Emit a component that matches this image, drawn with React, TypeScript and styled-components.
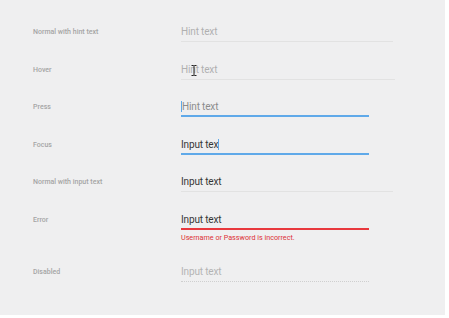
import React from 'react'
import styled, { createGlobalStyle } from 'styled-components'

const GlobalStyle = createGlobalStyle`
  html, body {
    margin: 0;
    background: #ffffff;
    font-family: Roboto, 'Liberation Sans', sans-serif;
  }
`

const Panel = styled.div`
  width: 445px;
  height: 315px;
  background: #efeff0;
  box-sizing: border-box;
  padding: 25px 0 0 33px;
  display: flex;
  flex-direction: column;
`

const Row = styled.div<{ tall?: boolean }>`
  display: grid;
  grid-template-columns: 148px 1fr;
  align-items: start;
  height: ${({ tall }) => (tall ? '52px' : '37.5px')};
`

const Label = styled.div`
  font-size: 7px;
  font-weight: 500;
  line-height: 14px;
  color: #a5a5a5;
`

const Field = styled.div<{ width: number }>`
  width: ${({ width }) => width}px;
  display: flex;
  flex-direction: column;
`

type Tone = 'hint' | 'input' | 'disabled'

const toneColor: Record<Tone, string> = {
  hint: '#b0b0b0',
  input: '#363636',
  disabled: '#b4b4b4',
}

const Value = styled.div<{ tone: Tone }>`
  position: relative;
  font-size: 10px;
  letter-spacing: -0.15px;
  line-height: 14px;
  color: ${({ tone }) => toneColor[tone]};
  padding-bottom: 2px;
`

type Line = 'normal' | 'active' | 'error' | 'disabled'

const Underline = styled.div<{ kind: Line }>`
  height: 0;
  border-bottom: ${({ kind }) =>
    kind === 'active'
      ? '2px solid #5fa9e9'
      : kind === 'error'
      ? '2px solid #e8383d'
      : kind === 'disabled'
      ? '1px dotted #cfcfcf'
      : '1px solid #e2e2e2'};
  margin-top: ${({ kind }) => (kind === 'active' || kind === 'error' ? '-1px' : '0')};
`

const Caret = styled.span`
  display: inline-block;
  width: 1px;
  height: 11px;
  background: #5fa9e9;
  vertical-align: -2px;
`

const Cursor = styled.svg`
  position: absolute;
  left: 10px;
  top: 2px;
`

const ErrorText = styled.div`
  margin-top: 3px;
  font-size: 7.2px;
  line-height: 10px;
  color: #dd2f35;
`

function IBeam() {
  return (
    <Cursor width="6" height="11" viewBox="0 0 6 11">
      <path d="M0.5 0.5h2l0.5 0.5 0.5-0.5h2M3 1v9M0.5 10.5h2l0.5-0.5 0.5 0.5h2" stroke="#222" strokeWidth="1" fill="none" />
    </Cursor>
  )
}

export default function App() {
  return (
    <>
      <GlobalStyle />
      <Panel>
        <Row>
          <Label>Normal with hint text</Label>
          <Field width={212}>
            <Value tone="hint">Hint text</Value>
            <Underline kind="normal" />
          </Field>
        </Row>
        <Row>
          <Label>Hover</Label>
          <Field width={214}>
            <Value tone="hint">
              Hint text
              <IBeam />
            </Value>
            <Underline kind="normal" />
          </Field>
        </Row>
        <Row>
          <Label>Press</Label>
          <Field width={188}>
            <Value tone="hint" style={{ color: '#8c8c8c' }}>
              <Caret />Hint text
            </Value>
            <Underline kind="active" />
          </Field>
        </Row>
        <Row>
          <Label>Focus</Label>
          <Field width={188}>
            <Value tone="input">
              Input tex<Caret />
            </Value>
            <Underline kind="active" />
          </Field>
        </Row>
        <Row>
          <Label>Normal with input text</Label>
          <Field width={212}>
            <Value tone="input">Input text</Value>
            <Underline kind="normal" />
          </Field>
        </Row>
        <Row tall>
          <Label>Error</Label>
          <Field width={188}>
            <Value tone="input">Input text</Value>
            <Underline kind="error" />
            <ErrorText>Username or Password is incorrect.</ErrorText>
          </Field>
        </Row>
        <Row>
          <Label>Disabled</Label>
          <Field width={188}>
            <Value tone="disabled">Input text</Value>
            <Underline kind="disabled" />
          </Field>
        </Row>
      </Panel>
    </>
  )
}
